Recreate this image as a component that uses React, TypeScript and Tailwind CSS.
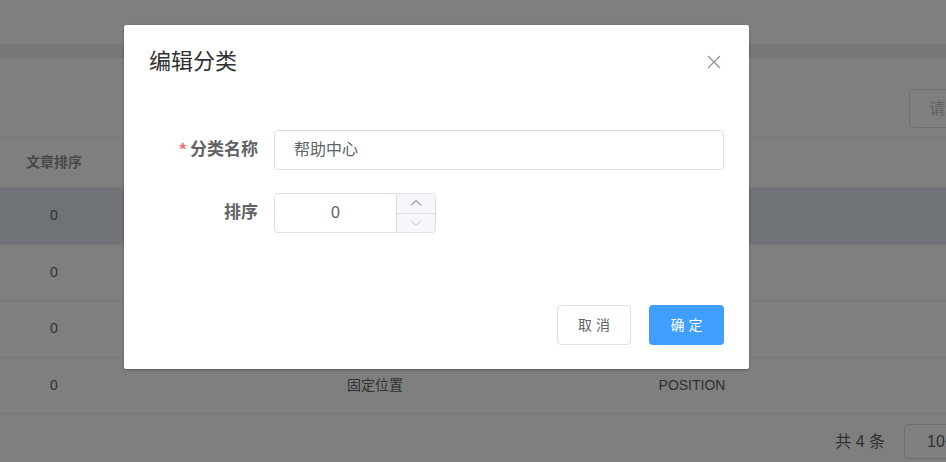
import React from 'react';

type Row = { sort: number; name: string; code: string };

const rows: Row[] = [
  { sort: 0, name: '帮助中心', code: 'HELP' },
  { sort: 0, name: '关于我们', code: 'ABOUT' },
  { sort: 0, name: '新闻动态', code: 'NEWS' },
  { sort: 0, name: '固定位置', code: 'POSITION' },
];

const font = { fontFamily: '"Liberation Sans", "Noto Sans CJK SC", sans-serif' };

export default function App() {
  return (
    <div className="relative w-[946px] h-[462px] overflow-hidden bg-white text-[#606266]" style={font}>
      {/* page behind the mask */}
      <div className="h-[44px] bg-white" />
      <div className="h-[14px] bg-[#ececf0]" />
      <div className="flex justify-end pt-[31px] pb-[9px]">
        <div className="w-[200px] h-[39px] -mr-[163px] border border-[#dcdfe6] rounded-[4px] flex items-center pl-[19px] text-[16px] text-[#c0c4cc] whitespace-nowrap">
          请输入分类名称
        </div>
      </div>
      <div className="border-t border-[#ebeef5]">
        <div className="grid grid-cols-[108px_534px_100px_1fr] h-[50px] items-center border-b border-[#ebeef5] text-[14px] font-bold text-[#909399]">
          <div className="text-center">文章排序</div>
          <div className="text-center">分类名称</div>
          <div className="text-center">分类编码</div>
          <div />
        </div>
        {rows.map((r, i) => (
          <div
            key={i}
            className={
              'grid grid-cols-[108px_534px_100px_1fr] h-[56.5px] items-center border-b border-[#ebeef5] text-[14px] ' +
              (i === 0 ? 'bg-[#dee7f1]' : 'bg-white')
            }
          >
            <div className="text-center">{r.sort}</div>
            <div className="text-center">{r.name}</div>
            <div className="text-center">{r.code}</div>
            <div />
          </div>
        ))}
        <div className="flex justify-end items-center pt-[10px] gap-[19px]">
          <span className="text-[16px] text-[#606266] whitespace-nowrap">共 4 条</span>
          <div className="w-[100px] h-[35px] -mr-[58px] border border-[#dcdfe6] rounded-[4px] flex items-center pl-[22px] text-[16px] whitespace-nowrap">
            10条/页
          </div>
        </div>
      </div>

      {/* mask */}
      <div className="absolute inset-0 bg-black/50" />

      {/* dialog */}
      <div className="absolute left-[124px] top-[25px] w-[625px] h-[344px] bg-white rounded-[2px] shadow-[0_1px_3px_rgba(0,0,0,0.3)] flex flex-col">
        <div className="flex items-start justify-between pl-[25px] pr-[28px] pt-[22px]">
          <span className="text-[22px] leading-[30px] text-[#303133]">编辑分类</span>
          <svg width="14" height="14" viewBox="0 0 14 14" className="mt-[8px]">
            <path d="M1 1L13 13M13 1L1 13" stroke="#909399" strokeWidth="1.3" />
          </svg>
        </div>
        <div className="flex flex-col gap-[23px] pt-[53px] pl-[25px] pr-[25px]">
          <div className="flex items-center">
            <label className="w-[125px] pr-[16px] text-right text-[17px] font-bold text-[#606266]">
              <span className="text-[#f56c6c] mr-[4px]">*</span>分类名称
            </label>
            <div className="flex-1 h-[40px] border border-[#dcdfe6] rounded-[4px] flex items-center pl-[19px] text-[16px] text-[#606266]">
              帮助中心
            </div>
          </div>
          <div className="flex items-center">
            <label className="w-[125px] pr-[16px] text-right text-[17px] font-bold text-[#606266]">排序</label>
            <div className="w-[162px] h-[40px] border border-[#dcdfe6] rounded-[4px] flex overflow-hidden">
              <div className="flex-1 flex items-center justify-center text-[16px] text-[#606266]">0</div>
              <div className="w-[39px] flex flex-col border-l border-[#dcdfe6] bg-[#f5f7fa]">
                <div className="flex-1 flex items-center justify-center border-b border-[#dcdfe6]">
                  <svg width="12" height="8" viewBox="0 0 12 8">
                    <path d="M1 6.5L6 1.5L11 6.5" fill="none" stroke="#606266" strokeWidth="1" />
                  </svg>
                </div>
                <div className="flex-1 flex items-center justify-center">
                  <svg width="12" height="8" viewBox="0 0 12 8">
                    <path d="M1 1.5L6 6.5L11 1.5" fill="none" stroke="#c0c4cc" strokeWidth="1" />
                  </svg>
                </div>
              </div>
            </div>
          </div>
        </div>
        <div className="mt-auto flex justify-end gap-[18px] pr-[25px] pb-[24px]">
          <button className="w-[74px] h-[40px] border border-[#dcdfe6] rounded-[4px] bg-white text-[14px] text-[#606266] tracking-[4px] pl-[4px]">
            取消
          </button>
          <button className="w-[75px] h-[40px] rounded-[4px] bg-[#409eff] text-[14px] text-white tracking-[4px] pl-[4px]">
            确定
          </button>
        </div>
      </div>
    </div>
  );
}
